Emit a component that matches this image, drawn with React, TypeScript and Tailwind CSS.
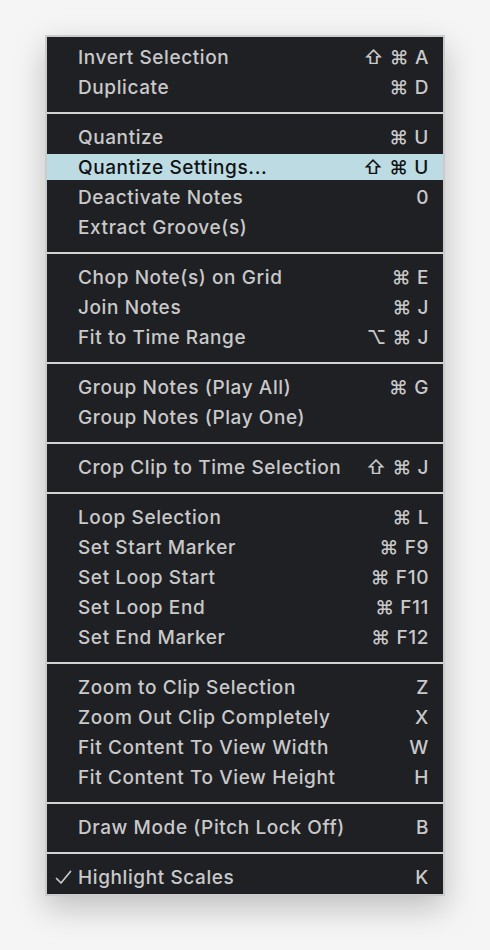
import React from "react";

type Item = {
  label: string;
  keys?: string;
  checked?: boolean;
  active?: boolean;
};

const sections: Item[][] = [
  [
    { label: "Invert Selection", keys: "⇧ ⌘ A" },
    { label: "Duplicate", keys: "⌘ D" },
  ],
  [
    { label: "Quantize", keys: "⌘ U" },
    { label: "Quantize Settings...", keys: "⇧ ⌘ U", active: true },
    { label: "Deactivate Notes", keys: "0" },
    { label: "Extract Groove(s)" },
  ],
  [
    { label: "Chop Note(s) on Grid", keys: "⌘ E" },
    { label: "Join Notes", keys: "⌘ J" },
    { label: "Fit to Time Range", keys: "⌥ ⌘ J" },
  ],
  [
    { label: "Group Notes (Play All)", keys: "⌘ G" },
    { label: "Group Notes (Play One)" },
  ],
  [{ label: "Crop Clip to Time Selection", keys: "⇧ ⌘ J" }],
  [
    { label: "Loop Selection", keys: "⌘ L" },
    { label: "Set Start Marker", keys: "⌘ F9" },
    { label: "Set Loop Start", keys: "⌘ F10" },
    { label: "Set Loop End", keys: "⌘ F11" },
    { label: "Set End Marker", keys: "⌘ F12" },
  ],
  [
    { label: "Zoom to Clip Selection", keys: "Z" },
    { label: "Zoom Out Clip Completely", keys: "X" },
    { label: "Fit Content To View Width", keys: "W" },
    { label: "Fit Content To View Height", keys: "H" },
  ],
  [{ label: "Draw Mode (Pitch Lock Off)", keys: "B" }],
  [{ label: "Highlight Scales", keys: "K", checked: true }],
];

const Row = ({ item }: { item: Item }) => (
  <div className="h-[30px] py-[2px]">
    <div
      className={
        "relative flex h-[26px] items-center justify-between pt-[1px] pl-[31px] pr-[14px] " +
        (item.active ? "bg-[#bddbe2] text-[#111214]" : "text-[#c9c9ca]")
      }
    >
      {item.checked && (
        <svg
          className="absolute left-[8px] top-[6px]"
          width="17"
          height="15"
          viewBox="0 0 17 15"
          fill="none"
          stroke="#c9c9ca"
          strokeWidth="1.7"
          strokeLinecap="round"
          strokeLinejoin="round"
        >
          <path d="M1.5 8.5 L6 13 L15.5 1.5" />
        </svg>
      )}
      <span>{item.label}</span>
      {item.keys && <span className="whitespace-pre">{item.keys}</span>}
    </div>
  </div>
);

export default function App() {
  return (
    <div className="min-h-[950px] w-[490px] bg-[#f5f5f5] pl-[45px] pt-[35px]">
      <div
        className="w-[400px] border-2 border-[#cbcbcb] bg-[#1f2023] pt-[5px] pb-[2px] text-[19px] font-medium leading-none tracking-[0.6px] shadow-[0_12px_30px_rgba(0,0,0,0.22)]"
        style={{ fontFamily: "Inter, 'DejaVu Sans', sans-serif" }}
      >
        {sections.map((sec, i) => (
          <div key={i}>
            {i > 0 && (
              <div className="pt-[10px] pb-[8px]">
                <div className="h-[2px] bg-[#d2d2d2]" />
              </div>
            )}
            {sec.map((item) => (
              <Row key={item.label} item={item} />
            ))}
          </div>
        ))}
      </div>
    </div>
  );
}
